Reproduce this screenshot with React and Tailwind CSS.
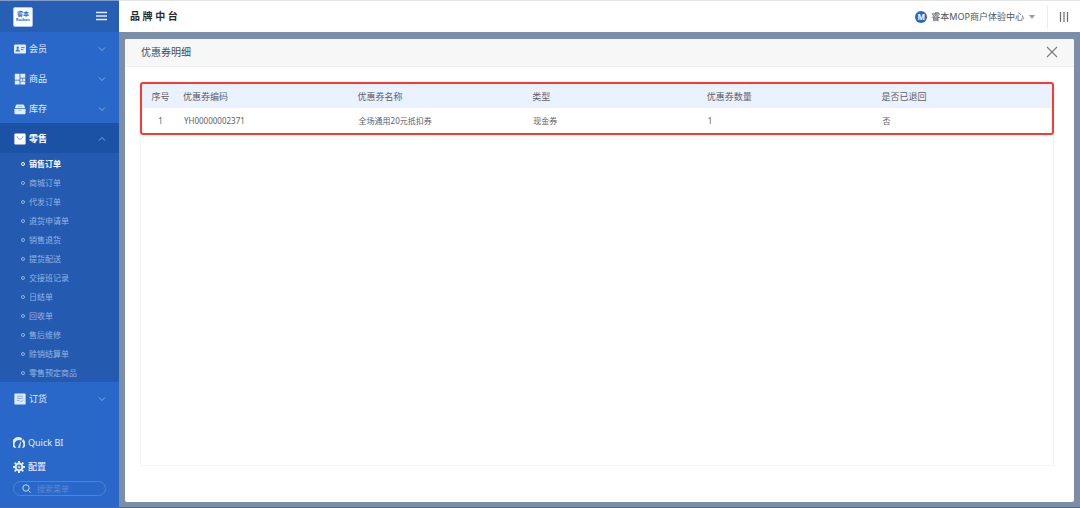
import React, { useState } from "react";

const subMenu = [
  "销售订单",
  "商城订单",
  "代发订单",
  "退货申请单",
  "销售退货",
  "提货配送",
  "交接班记录",
  "日结单",
  "回收单",
  "售后维修",
  "赊销结算单",
  "零售预定商品",
];

const columns = ["优惠券编码", "优惠券名称", "类型", "优惠券数量", "是否已退回"];

const coupons = [
  ["YH00000002371", "全场通用20元抵扣券", "现金券", "1", "否"],
];

const MemberIcon = () => (
  <svg viewBox="0 0 12 12" className="w-3 h-3 shrink-0">
    <rect x="0" y="1.5" width="12" height="9" rx="1" fill="#e3edfb" />
    <circle cx="3.7" cy="4.7" r="1.2" fill="#3d76cf" />
    <path d="M1.6 8.4c0-2.8 4.2-2.8 4.2 0z" fill="#3d76cf" />
    <path d="M7 4.6h3.6M7 6.6h2.4" stroke="#3d76cf" strokeWidth=".9" />
  </svg>
);

const GoodsIcon = () => (
  <svg viewBox="0 0 12 12" className="w-3 h-3 shrink-0" fill="#e3edfb">
    <path d="M.8.8h4.8v6H.8zM.8 7.6h4.8v3.8H.8zM6.4.8h4.8v4H6.4zM6.4 5.5h2.1v2.4H6.4zM9.1 5.5h2.1v2.4H9.1zM6.4 8.6h4.8v2.8H6.4z" />
  </svg>
);

const StockIcon = () => (
  <svg viewBox="0 0 12 12" className="w-3 h-3 shrink-0">
    <path
      d="M3 1.4h6a1 1 0 0 1 1 .6l1.2 3.2H.8L2 2a1 1 0 0 1 1-.6zM.4 6h11.2v4.2a1 1 0 0 1-1 1H1.4a1 1 0 0 1-1-1z"
      fill="#e3edfb"
    />
    <path d="M3.6 3.4h4.8M4.4 7.4h3.2" stroke="#8fb2e6" strokeWidth=".8" />
  </svg>
);

const RetailIcon = () => (
  <svg viewBox="0 0 12 12" className="w-3 h-3 shrink-0">
    <rect x=".4" y=".4" width="11.2" height="11.2" rx="1" fill="#fff" />
    <path
      d="M3.2 3.2c.2 4 5.4 4 5.6 0"
      fill="none"
      stroke="#6f99d6"
      strokeWidth=".9"
    />
  </svg>
);

const OrderIcon = () => (
  <svg viewBox="0 0 12 12" className="w-3 h-3 shrink-0">
    <rect x=".4" y=".4" width="11.2" height="11.2" rx="1.2" fill="#e3edfb" />
    <path
      d="M2.8 3.2h6.4M2.8 5.3h6.4M2.8 7.4h2.6M6 7.6l1.3 1.3 2-2"
      fill="none"
      stroke="#7ba4e2"
      strokeWidth=".9"
    />
  </svg>
);

const GaugeIcon = () => (
  <svg viewBox="0 0 12 12" className="w-3 h-3 shrink-0">
    <path
      d="M1.2 10.8A5.8 5.8 0 0 1 9.2 1.5L8.1 3.8A3.5 3.5 0 0 0 3.4 10.8z"
      fill="#e3edfb"
    />
    <path d="M10 2.1A5.8 5.8 0 0 1 10.8 10.8H8.8A4 4 0 0 0 9 4.6z" fill="#e3edfb" />
    <path d="M5.2 10.6L7.8 4.8 6.8 10.6z" fill="#e3edfb" stroke="#e3edfb" strokeWidth=".5" />
  </svg>
);

const GearIcon = () => (
  <svg viewBox="0 0 12 12" className="w-3 h-3 shrink-0" fill="none" stroke="#e3edfb">
    <circle cx="6" cy="6" r="3.4" strokeWidth="2" />
    <circle cx="6" cy="6" r="1" strokeWidth=".8" />
    <path
      d="M6 0v2M6 10v2M0 6h2M10 6h2M1.7 1.7l1.4 1.4M8.9 8.9l1.4 1.4M1.7 10.3l1.4-1.4M8.9 3.1l1.4-1.4"
      strokeWidth="2"
    />
  </svg>
);

const Chevron = ({ up }) => (
  <svg viewBox="0 0 8 8" className="w-2 h-2 ml-auto" fill="none" stroke="#8fb2e6" strokeWidth=".9">
    <path d={up ? "M1 5.5l3-3 3 3" : "M1 2.5l3 3 3-3"} />
  </svg>
);

const MenuItem = ({ icon, label, open }) => (
  <button
    type="button"
    className={`${
      open ? "bg-[#1c52a6] text-white font-bold" : "text-[#e3edfb]"
    } w-full h-[30px] pt-0.5 pl-3.5 pr-[13px] flex items-center gap-[3px] text-[9px] cursor-pointer`}
  >
    {icon}
    {label}
    <Chevron up={open} />
  </button>
);

const Sidebar = () => {
  const [active, setActive] = useState("销售订单");
  const [keyword, setKeyword] = useState("");

  return (
    <aside className="w-[119px] shrink-0 bg-[#2968c8] flex flex-col">
      <div className="h-8 pl-[13px] pr-3 flex items-center justify-between bg-[#265fb3] border-t border-[#7f9cc9]">
        <div className="w-5 h-5 rounded-xs bg-white border border-[#a9c4ee] text-[#2968c8] flex flex-col items-center justify-center">
          <span className="text-[6px] leading-[7px] font-bold">睿本</span>
          <span className="text-[4px] leading-[4px] font-bold">Ruiben</span>
        </div>
        <button type="button" aria-label="收起菜单" className="pb-0.5 cursor-pointer">
          <svg viewBox="0 0 11 10" className="w-[11px] h-2.5" stroke="#e3edfb" strokeWidth="1.5">
            <path d="M0 1.5h11M0 5h11M0 8.5h11" />
          </svg>
        </button>
      </div>

      <nav className="pt-px">
        <MenuItem icon={<MemberIcon />} label="会员" />
        <MenuItem icon={<GoodsIcon />} label="商品" />
        <MenuItem icon={<StockIcon />} label="库存" />
        <MenuItem icon={<RetailIcon />} label="零售" open />
        <ul className="pt-px bg-[#245bb0] mb-px">
          {subMenu.map((item) => (
            <li key={item}>
              <button
                type="button"
                onClick={() => setActive(item)}
                className={`${
                  active === item ? "text-white font-bold" : "text-[#94b3e2]"
                } w-full h-[19px] pl-[21px] flex items-center gap-1 text-[8px] cursor-pointer`}
              >
                <span className="w-1 h-1 rounded-full border border-current"></span>
                {item}
              </button>
            </li>
          ))}
        </ul>
        <MenuItem icon={<OrderIcon />} label="订货" />
      </nav>

      <div className="mt-auto px-[13px] pb-[11px] text-[9px] text-[#e3edfb]">
        <a href="#bi" className="h-6 flex items-center gap-[3px]">
          <GaugeIcon />
          Quick BI
        </a>
        <a href="#config" className="h-6 flex items-center gap-[3px] font-medium">
          <GearIcon />
          配置
        </a>
        <label className="mt-0.5 h-[15px] px-2 flex items-center gap-1.5 rounded-full border border-[#5283d3]">
          <svg viewBox="0 0 9 9" className="w-[9px] h-[9px] shrink-0" fill="none" stroke="#c3d6f3">
            <circle cx="4" cy="4" r="3.2" />
            <path d="M6.4 6.4L8.7 8.7" />
          </svg>
          <input
            type="text"
            aria-label="搜索菜单"
            placeholder="搜索菜单"
            value={keyword}
            onChange={(e) => setKeyword(e.target.value)}
            className="min-w-0 flex-1 text-[8px] leading-3 text-white outline-none placeholder:text-[#5c8ad5]"
          />
        </label>
      </div>
    </aside>
  );
};

const TopBar = () => (
  <header className="h-8 shrink-0 pl-[11px] pr-[11px] flex items-center bg-white border-t border-[#e4e4e4]">
    <h1 className="text-[10px] font-bold text-[#262b33]">品 牌 中 台</h1>
    <button type="button" className="ml-auto mr-3 flex items-center gap-1 text-[9px] text-[#4c5460] cursor-pointer">
      <span className="w-3 h-3 rounded-full bg-[#2968c8] text-white font-bold text-[8px] flex items-center justify-center">
        M
      </span>
      睿本MOP商户体验中心
      <svg viewBox="0 0 6 4" className="w-1.5 h-1 ml-px" fill="#9a9a9a">
        <path d="M0 0h6L3 4z" />
      </svg>
    </button>
    <button type="button" aria-label="更多" className="h-6 pl-[11px] flex items-center border-l border-[#ececec] cursor-pointer">
      <svg viewBox="0 0 10 10" className="w-2.5 h-2.5" stroke="#6a6a6a" strokeWidth="1.2">
        <path d="M1.5 0v10M5 0v10M8.5 0v10" />
      </svg>
    </button>
  </header>
);

const CouponTable = () => (
  <div className="m-px rounded-[1px] outline-2 outline-[#fa3a30]">
    <table className="w-full table-fixed border-collapse text-left text-[#5e6066]">
      <thead className="bg-[#eaf2ff]">
        <tr className="h-6 text-[9px]">
          <th className="w-[37px] pt-0.5 font-normal text-center">序号</th>
          {columns.map((col) => (
            <th key={col} className="pt-0.5 pl-1 font-normal">
              {col}
            </th>
          ))}
        </tr>
      </thead>
      <tbody>
        {coupons.map((row, index) => (
          <tr key={row[0]} className="h-[25px] text-[8px]">
            <td className="text-center">{index + 1}</td>
            {row.map((cell, i) => (
              <td key={i} className="pl-[5px]">
                {cell}
              </td>
            ))}
          </tr>
        ))}
      </tbody>
    </table>
  </div>
);

const App = () => {
  return (
    <div className="min-h-screen flex bg-[#7a8ea8] border-b border-[#56657a] font-['Noto_Sans','Noto_Sans_CJK_SC',sans-serif]">
      <Sidebar />
      <div className="flex-1 min-w-0 flex flex-col">
        <TopBar />
        <main className="flex-1 flex pt-[7px] pb-[5px] px-1.5">
          <section className="flex-1 min-w-0 flex flex-col bg-white rounded-xs overflow-hidden">
            <div className="h-7 px-4 flex items-center justify-between bg-[#f7f7f7] border-b border-[#efefef]">
              <h2 className="text-[10px] text-[#454b55]">优惠券明细</h2>
              <button type="button" aria-label="关闭" className="pb-0.5 cursor-pointer">
                <svg viewBox="0 0 12 12" className="w-3 h-3" stroke="#7c7c7c" strokeWidth="1.1">
                  <path d="M1 1l10 10M11 1L1 11" />
                </svg>
              </button>
            </div>
            <div className="flex-1 flex pt-[15px] pb-9 pl-[15px] pr-5">
              <div className="flex-1 min-w-0 border border-[#f4f4f4]">
                <CouponTable />
              </div>
            </div>
          </section>
        </main>
      </div>
    </div>
  );
};

export default App;
